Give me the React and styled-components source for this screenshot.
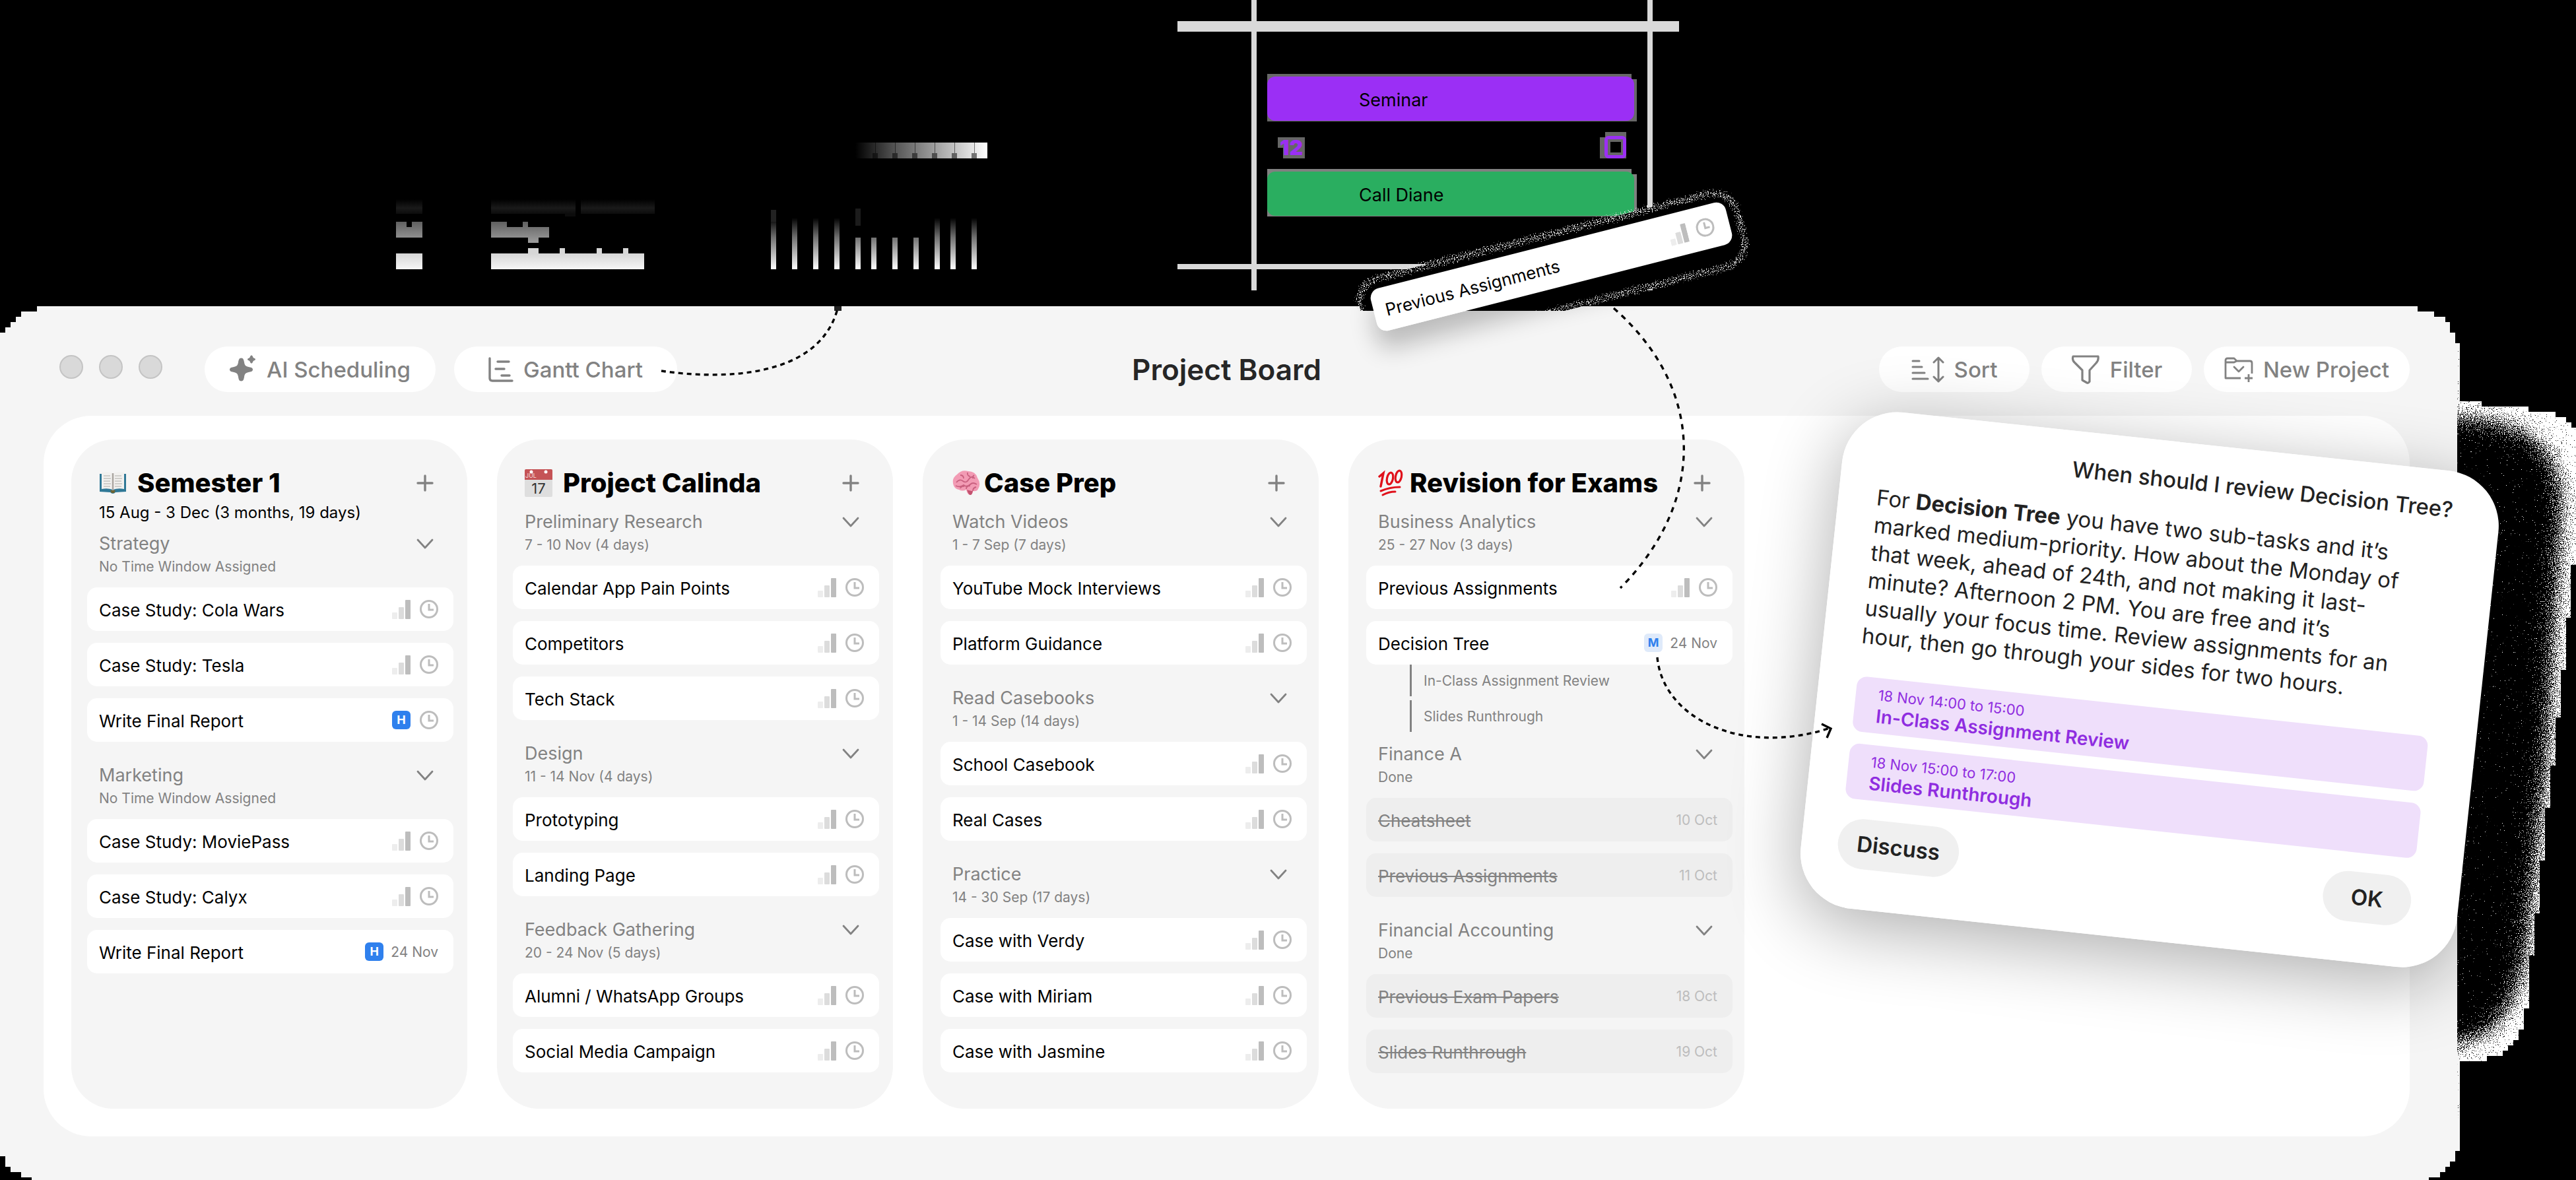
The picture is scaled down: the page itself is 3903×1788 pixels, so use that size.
import React from "react";
import styled, { createGlobalStyle, css } from "styled-components";

const GlobalStyle = createGlobalStyle`
  *, *::before, *::after { box-sizing: border-box; }
  body {
    margin: 0;
    background: #000;
    color: #000;
    font-family: Inter, Roboto, "Liberation Sans", sans-serif;
  }
  button { font: inherit; color: inherit; border: 0; padding: 0; background: none; cursor: pointer; }
  h1, h2, h3, p, ul { margin: 0; padding: 0; }
  ul { list-style: none; }
`;

const Stage = styled.main`
  position: relative;
  min-height: 100vh;
  overflow: hidden;
`;

/* ---------- calendar strip above the window ---------- */

const CalendarStrip = styled.section`
  height: 464px;
  padding: 112px 0 0 1920px;
`;

const DayStack = styled.div`
  display: flex;
  flex-direction: column;
  gap: 16px;
  width: 560px;
`;

const EventBlock = styled.div`
  height: 72px;
  padding: 4px 4px 1px 0;
  background: linear-gradient(${(p) => p.$edge}, ${(p) => p.$edge}) 0 0 / 552px 100% no-repeat,
    linear-gradient(${(p) => p.$edge}, ${(p) => p.$edge}) 0 8px / 100% 64px no-repeat;
`;

const EventFill = styled.div`
  display: flex;
  align-items: center;
  height: 100%;
  padding: 4px 0 0 139px;
  border-radius: 12px;
  background: ${(p) => p.$color};
  font-size: 27px;
`;

const DayFooter = styled.div`
  display: flex;
  justify-content: space-between;
  align-items: flex-end;
  height: 40px;
  padding: 0 16px;
`;

const DayNumber = styled.span`
  padding: 0 3px;
  height: 32px;
  background: linear-gradient(#666, #666) 0 0 / 100% 16px no-repeat,
    linear-gradient(#666, #666) 8px 0 / 100% 100% no-repeat;
  color: #9b2ff5;
  font-size: 32px;
  font-weight: 900;
  line-height: 32px;
`;

const DayCheck = styled.input`
  appearance: none;
  width: 40px;
  height: 40px;
  margin: 0;
  padding: 6px 0 0 7px;
  background: linear-gradient(#666, #666) 8px 0 / 32px 8px no-repeat,
    linear-gradient(#666, #666) 0 8px / 100% 32px no-repeat;
  &::before {
    content: "";
    display: block;
    width: 33px;
    height: 34px;
    border: 5px solid #9b2ff5;
    border-radius: 6px;
    background: linear-gradient(#000, #000) center / 16px 16px no-repeat #666;
  }
`;

/* ---------- window ---------- */

const Window = styled.section`
  margin-right: 176px;
  min-height: calc(100vh - 464px);
  padding: 61px 76px 66px 66px;
  background: #f5f5f5;
  clip-path: polygon(
    0 40px, 8px 40px, 8px 32px, 16px 32px, 16px 24px, 24px 24px, 24px 16px, 32px 16px, 32px 8px, 56px 8px, 56px 0,
    calc(100% - 64px) 0, calc(100% - 64px) 8px, calc(100% - 39px) 8px, calc(100% - 39px) 16px,
    calc(100% - 22px) 16px, calc(100% - 22px) 24px, calc(100% - 15px) 24px, calc(100% - 15px) 40px,
    calc(100% - 7px) 40px, calc(100% - 7px) 56px, 100% 56px,
    100% calc(100% - 44px), calc(100% - 7px) calc(100% - 44px), calc(100% - 7px) calc(100% - 28px),
    calc(100% - 15px) calc(100% - 28px), calc(100% - 15px) calc(100% - 20px), calc(100% - 22px) calc(100% - 20px),
    calc(100% - 22px) calc(100% - 12px), calc(100% - 30px) calc(100% - 12px), calc(100% - 30px) calc(100% - 4px),
    calc(100% - 47px) calc(100% - 4px), calc(100% - 47px) 100%,
    48px 100%, 48px calc(100% - 4px), 32px calc(100% - 4px), 32px calc(100% - 12px), 16px calc(100% - 12px),
    16px calc(100% - 20px), 8px calc(100% - 20px), 8px calc(100% - 36px), 0 calc(100% - 36px)
  );
`;

const Toolbar = styled.header`
  display: grid;
  grid-template-columns: 1fr auto 1fr;
  align-items: center;
  height: 69px;
  margin-bottom: 36px;
`;

const ToolGroup = styled.div`
  display: flex;
  align-items: center;
  gap: ${(p) => p.$gap}px;
  justify-content: ${(p) => p.$align || "flex-start"};
`;

const Lights = styled.div`
  display: flex;
  gap: 24px;
  padding: 0 36px 8px 24px;
`;

const Light = styled.span`
  width: 36px;
  height: 36px;
  border: 2px solid #c4c4c4;
  border-radius: 50%;
  background: #d9d9d9;
`;

const Title = styled.h1`
  color: #262626;
  font-size: 44px;
  font-weight: 600;
  line-height: 56px;
`;

const ToolButton = styled.button`
  display: flex;
  align-items: center;
  justify-content: center;
  gap: 15px;
  height: 69px;
  min-width: ${(p) => p.$width}px;
  border-radius: 35px;
  background: #fff;
  color: #828282;
  font-size: 33px;
  font-weight: 500;
  line-height: 40px;
`;

const Board = styled.div`
  display: grid;
  grid-template-columns: repeat(4, minmax(0, 1fr));
  gap: 45px;
  padding: 36px 1008px 42px 42px;
  border-radius: 72px;
  background: #fff;
`;

const Column = styled.section`
  display: flex;
  flex-direction: column;
  padding: 38px 21px 54px ${(p) => (p.$late ? 27 : 24)}px;
  ${(p) => p.$late && css`padding-right: 18px;`}
  border-radius: 64px;
  background: #f5f5f5;
`;

const ColumnHead = styled.header`
  display: flex;
  align-items: center;
  height: 56px;
  padding: 0 ${(p) => (p.$late ? 33 : 30)}px 0 18px;
`;

const ColumnTitle = styled.h2`
  flex: 1;
  margin-left: ${(p) => (p.$late ? 6 : 16)}px;
  font-size: 40px;
  font-weight: 800;
  line-height: 56px;
  white-space: nowrap;
`;

const ColumnDates = styled.p`
  padding-left: 18px;
  font-size: 24px;
  line-height: 33px;
`;

const Group = styled.section`
  margin-top: ${(p) => p.$top}px;
`;

const GroupHead = styled.header`
  display: flex;
  align-items: center;
  justify-content: space-between;
  height: 40px;
  padding: 0 30px 0 18px;
`;

const GroupTitle = styled.h3`
  color: #828282;
  font-size: 27px;
  font-weight: 400;
  line-height: 42px;
`;

const GroupDates = styled.p`
  margin-bottom: 16px;
  padding-left: 18px;
  color: #828282;
  font-size: 21px;
  line-height: 30px;
`;

const IconButton = styled.button`
  display: flex;
  width: 26px;
  height: 26px;
  color: #828282;
`;

const Tasks = styled.ul`
  display: flex;
  flex-direction: column;
  gap: 18px;
`;

const TaskCard = styled.div`
  display: flex;
  align-items: center;
  justify-content: space-between;
  height: 66px;
  padding: 0 23px 0 18px;
  border-radius: 15px;
  background: ${(p) => (p.$done ? "#eeeeee" : "#ffffff")};
  color: ${(p) => (p.$done ? "#828282" : "#000000")};
  font-size: 26px;
  line-height: 32px;
  white-space: nowrap;
`;

const TaskName = styled.span`
  padding-top: 4px;
  text-decoration: ${(p) => (p.$done ? "line-through" : "none")};
`;

const Meta = styled.span`
  display: flex;
  align-items: center;
  gap: ${(p) => (p.$dated ? 11 : 14)}px;
`;

const DueDate = styled.time`
  padding-top: 2px;
  color: ${(p) => (p.$done ? "#bdbdbd" : "#828282")};
  font-size: 21px;
`;

const Priority = styled.span`
  display: flex;
  align-items: center;
  justify-content: center;
  width: 28px;
  height: 28px;
  border-radius: 6px;
  background: ${(p) => (p.$level === "H" ? "#2f80ed" : "#dfeafa")};
  color: ${(p) => (p.$level === "H" ? "#ffffff" : "#2f80ed")};
  font-size: 18px;
  font-weight: 700;
`;

const Subtasks = styled.ul`
  display: flex;
  flex-direction: column;
  gap: 6px;
  padding-left: 66px;
`;

const Subtask = styled.li`
  height: 48px;
  padding-left: 18px;
  border-left: 3px solid #828282;
  color: #828282;
  font-size: 21px;
  line-height: 50px;
`;

/* ---------- floating pieces ---------- */

const Drawing = styled.svg`
  position: absolute;
  top: 0;
  left: 0;
  pointer-events: none;
`;

const ShadowClip = styled.div`
  position: absolute;
  inset: 464px 176px 0 0;
  overflow: hidden;
  pointer-events: none;
`;

const PopupShadow = styled.div`
  position: absolute;
  top: 203px;
  left: 2757px;
  width: 1000px;
  height: 756px;
  border-radius: 84px;
  box-shadow: 0 24px 110px rgba(0, 0, 0, 0.32);
  transform: rotate(6.1deg);
`;

const Popup = styled.section`
  position: absolute;
  top: 667px;
  left: 2757px;
  width: 1000px;
  padding: 37px 72px 61px 58px;
  border-radius: 84px;
  background: #fff;
  color: #222;
  font-size: 33px;
  line-height: 42px;
  white-space: nowrap;
  transform: rotate(6.1deg);
`;

const Question = styled.p`
  margin-bottom: 32px;
  font-weight: 500;
  text-align: right;
`;

const Slots = styled.div`
  display: flex;
  flex-direction: column;
  gap: 18px;
  margin: 41px 0 29px;
`;

const Slot = styled.div`
  height: 84px;
  padding: 10px 34px;
  border-radius: 15px;
  background: #efdffb;
  color: #8f2de0;
  font-size: 22px;
  line-height: 32px;
`;

const SlotName = styled.strong`
  display: block;
  font-size: 28px;
  font-weight: 600;
`;

const Actions = styled.div`
  display: flex;
  justify-content: space-between;
  margin-left: -3px;
`;

const ActionButton = styled.button`
  height: 76px;
  min-width: ${(p) => p.$width}px;
  border-radius: 38px;
  background: #f0f0f0;
  font-size: 33px;
  font-weight: 600;
`;

const DraggedCard = styled.div`
  position: absolute;
  top: 371px;
  left: 2073px;
  width: 555px;
  border-radius: 15px;
  box-shadow: -4px 26px 36px rgba(0, 0, 0, 0.24);
  transform: rotate(-14.3deg);
`;

/* ---------- icons ---------- */

const BarsIcon = () => (
  <svg width="28" height="30" viewBox="0 0 28 30" aria-hidden="true">
    <rect x="0" y="20" width="8" height="10" rx="1" fill="#ededed" />
    <rect x="10" y="12" width="8" height="18" rx="1" fill="#dcdcdc" />
    <rect x="20" y="1" width="8" height="29" rx="1" fill="#bdbdbd" />
  </svg>
);

const ClockIcon = () => (
  <svg width="28" height="28" viewBox="0 0 28 28" fill="none" stroke="#bdbdbd" strokeWidth="3" aria-hidden="true">
    <circle cx="14" cy="14" r="12.5" />
    <path d="M14 6v9h7" />
  </svg>
);

const PlusIcon = () => (
  <svg width="26" height="26" viewBox="0 0 26 26" stroke="currentColor" strokeWidth="3.4" strokeLinecap="round">
    <path d="M13 2v22M2 13h22" />
  </svg>
);

const ChevronIcon = () => (
  <svg width="26" height="26" viewBox="0 0 26 26" fill="none" stroke="currentColor" strokeWidth="2.8" strokeLinecap="round" strokeLinejoin="round">
    <path d="M2 7l11 12L24 7" />
  </svg>
);

const SparkleIcon = () => (
  <svg width="41" height="44" viewBox="0 0 41 44" fill="currentColor">
    <path d="M17.500 4.500C21 4.500 21.500 8 22 11C22.800 15.500 24 17 28.500 18C31.500 18.600 35 19 35 22C35 25 31.500 25.400 28.500 26C24 27 22.800 28.500 22 33C21.500 36 21 39.500 17.500 39.500C14 39.500 13.500 36 13 33C12.200 28.500 11 27 6.500 26C3.500 25.400 0 25 0 22C0 19 3.500 18.600 6.500 18C11 17 12.200 15.500 13 11C13.500 8 14 4.500 17.500 4.500Z" />
    <path d="M33 0.500C35 0.500 35 3.200 35.800 4C36.600 4.800 39 4.800 39 6.500C39 8.200 36.600 8.200 35.800 9C35 9.800 35 12.500 33 12.500C31 12.500 31 9.800 30.200 9C29.400 8.200 27 8.200 27 6.500C27 4.800 29.400 4.800 30.200 4C31 3.200 31 0.500 33 0.500Z" />
  </svg>
);

const GanttIcon = () => (
  <svg width="38" height="38" viewBox="0 0 38 38" fill="none" stroke="currentColor" strokeWidth="3.400" strokeLinecap="round">
    <path d="M2 2v30q0 4 4 4h30M14 7h17M11 18h13M20 28h12" />
  </svg>
);

const SortIcon = () => (
  <svg width="50" height="40" viewBox="0 0 50 40" fill="none" stroke="currentColor" strokeWidth="3" strokeLinecap="round" strokeLinejoin="round">
    <path d="M2 7h10M2 16h14M2 25h18M2 34h23M41 2v36M34 9l7-7 7 7M34 31l7 7 7-7" />
  </svg>
);

const FilterIcon = () => (
  <svg width="44" height="44" viewBox="0 0 44 44" fill="none" stroke="currentColor" strokeWidth="3.200" strokeLinejoin="round">
    <path d="M3 2h38q1 6-3 10L28 23v17q-2 3-4 2l-7-4V23L6 12Q1 8 3 2Z" />
  </svg>
);

const FolderIcon = () => (
  <svg width="44" height="40" viewBox="0 0 44 40" fill="none" stroke="currentColor" strokeWidth="2.800" strokeLinejoin="round">
    <path d="M25 33H2V6q0-3 3-3h10l4 4h20q3 0 3 3v16M2 9h13l4-2M37 27v12M31 33h12" />
    <path d="M15 16l7 7 7-7" strokeLinecap="round" />
  </svg>
);

const BookEmoji = () => (
  <svg width="42" height="36" viewBox="0 0 42 36" aria-hidden="true">
    <path d="M1 4h40v27l-16 1q-4 4-8 0l-16-1Z" fill="#2f7896" />
    <path d="M4 2q9-2 17 1 8-3 17-1v25q-9-2-17 1-8-3-17-1Z" fill="#f2f1ef" />
    <path d="M21 3v26" stroke="#a9a5a0" strokeWidth="2.500" />
    <path d="M7 7h10M7 11h11M7 15h10M7 19h11M7 23h10M24 7h10M24 11h11M24 15h10M24 19h11M24 23h10" stroke="#c4c2bf" strokeWidth="1.500" fill="none" />
    <path d="M17 29h8l-2 4h-4Z" fill="#6f6434" />
  </svg>
);

const CalendarEmoji = () => (
  <svg width="42" height="42" viewBox="0 0 42 42" aria-hidden="true">
    <rect width="42" height="42" rx="2" fill="#dedede" />
    <path d="M0 2q0-2 2-2h38q2 0 2 2v14H0Z" fill="#c55356" />
    <circle cx="10" cy="4" r="2.500" fill="#fff" />
    <circle cx="32" cy="4" r="2.500" fill="#fff" />
    <text x="1" y="13" fontSize="9" fill="#f3dcdc">JUL</text>
    <text x="21" y="37" fontSize="22" textAnchor="middle" fill="#333">17</text>
  </svg>
);

const BrainEmoji = () => (
  <svg width="42" height="42" viewBox="0 0 42 42" aria-hidden="true">
    <path d="M2 25Q-2 14 7 8 14 0 24 3q11 0 14 10 6 9 1 17-2 4-8 3-1 6-4 6-4 0-6-8-6 3-11 0-6-1-8-6Z" fill="#f29bb4" />
    <path d="M6 20q5-6 10-2t9-3q4-6 9-1M5 25q7 3 12-1 5 4 10-1 4-4 10 0M12 9q5 0 5 5M23 5q-1 5 4 6M33 9q-3 2-2 5M21 30q0-5 6-5M31 33q0-5 5-6M12 29q1-4 6-3" stroke="#c9607f" strokeWidth="1.800" fill="none" />
    <path d="M22 31q6 2 9 2-1 6-4 6-3-1-5-8Z" fill="#c3526f" />
  </svg>
);

const HundredEmoji = () => (
  <svg width="42" height="42" viewBox="0 0 42 42" fill="none" stroke="#e0111b" strokeLinecap="round" aria-hidden="true">
    <path d="M2 11l6-5-4 20" strokeWidth="3.500" />
    <ellipse cx="18" cy="14" rx="4.500" ry="9" transform="rotate(12 18 14)" strokeWidth="3.200" />
    <ellipse cx="31" cy="11" rx="4.500" ry="9" transform="rotate(12 31 11)" strokeWidth="3.200" />
    <path d="M4 33q14-6 29-6" strokeWidth="3" />
    <path d="M7 39q9-5 19-5" strokeWidth="3" />
  </svg>
);

/* ---------- data ---------- */

const t = (name, extra = {}) => ({ name, ...extra });

const columns = [
  {
    title: "Semester 1",
    icon: BookEmoji,
    dates: "15 Aug - 3 Dec (3 months, 19 days)",
    groups: [
      {
        title: "Strategy",
        dates: "No Time Window Assigned",
        tasks: [t("Case Study: Cola Wars"), t("Case Study: Tesla"), t("Write Final Report", { level: "H" })],
      },
      {
        title: "Marketing",
        dates: "No Time Window Assigned",
        tasks: [t("Case Study: MoviePass"), t("Case Study: Calyx"), t("Write Final Report", { level: "H", due: "24 Nov" })],
      },
    ],
  },
  {
    title: "Project Calinda",
    icon: CalendarEmoji,
    groups: [
      {
        title: "Preliminary Research",
        dates: "7 - 10 Nov (4 days)",
        tasks: [t("Calendar App Pain Points"), t("Competitors"), t("Tech Stack")],
      },
      { title: "Design", dates: "11 - 14 Nov (4 days)", tasks: [t("Prototyping"), t("Landing Page")] },
      {
        title: "Feedback Gathering",
        dates: "20 - 24 Nov (5 days)",
        tasks: [t("Alumni / WhatsApp Groups"), t("Social Media Campaign")],
      },
    ],
  },
  {
    title: "Case Prep",
    icon: BrainEmoji,
    late: true,
    groups: [
      { title: "Watch Videos", dates: "1 - 7 Sep (7 days)", tasks: [t("YouTube Mock Interviews"), t("Platform Guidance")] },
      { title: "Read Casebooks", dates: "1 - 14 Sep (14 days)", tasks: [t("School Casebook"), t("Real Cases")] },
      {
        title: "Practice",
        dates: "14 - 30 Sep (17 days)",
        tasks: [t("Case with Verdy"), t("Case with Miriam"), t("Case with Jasmine")],
      },
    ],
  },
  {
    title: "Revision for Exams",
    icon: HundredEmoji,
    late: true,
    groups: [
      {
        title: "Business Analytics",
        dates: "25 - 27 Nov (3 days)",
        tasks: [
          t("Previous Assignments"),
          t("Decision Tree", { level: "M", due: "24 Nov", subtasks: ["In-Class Assignment Review", "Slides Runthrough"] }),
        ],
      },
      {
        title: "Finance A",
        dates: "Done",
        tight: true,
        tasks: [t("Cheatsheet", { due: "10 Oct", done: true }), t("Previous Assignments", { due: "11 Oct", done: true })],
      },
      {
        title: "Financial Accounting",
        dates: "Done",
        tasks: [t("Previous Exam Papers", { due: "18 Oct", done: true }), t("Slides Runthrough", { due: "19 Oct", done: true })],
      },
    ],
  },
];

const Task = ({ task }) => (
  <TaskCard $done={task.done}>
    <TaskName as={task.done ? "s" : "span"} $done={task.done}>
      {task.name}
    </TaskName>
    <Meta $dated={Boolean(task.due)}>
      {task.level && <Priority $level={task.level}>{task.level}</Priority>}
      {!task.level && !task.due && <BarsIcon />}
      {task.due ? <DueDate $done={task.done}>{task.due}</DueDate> : <ClockIcon />}
    </Meta>
  </TaskCard>
);

const TaskGroup = ({ group, first }) => (
  <Group $top={first ? 11 : group.tight ? 14 : 31}>
    <GroupHead>
      <GroupTitle>{group.title}</GroupTitle>
      <IconButton aria-label={`Collapse ${group.title}`}>
        <ChevronIcon />
      </IconButton>
    </GroupHead>
    <GroupDates>{group.dates}</GroupDates>
    <Tasks>
      {group.tasks.map((task, i) => (
        <li key={i}>
          <Task task={task} />
          {task.subtasks && (
            <Subtasks>
              {task.subtasks.map((name) => (
                <Subtask key={name}>{name}</Subtask>
              ))}
            </Subtasks>
          )}
        </li>
      ))}
    </Tasks>
  </Group>
);

const barXs = [1168, 1200, 1232, 1264, 1296, 1320, 1352, 1384, 1416, 1440, 1472];

const CalendarRemains = () => (
  <Drawing width="3903" height="464" viewBox="0 0 3903 464" aria-hidden="true">
    <defs>
      <linearGradient id="low" x1="0" y1="384" x2="0" y2="408" gradientUnits="userSpaceOnUse">
        <stop offset="0" stopColor="#d6d6d6" />
        <stop offset="1" stopColor="#f6f6f6" />
      </linearGradient>
      <linearGradient id="mid" x1="0" y1="336" x2="0" y2="366" gradientUnits="userSpaceOnUse">
        <stop offset="0" stopColor="#606060" />
        <stop offset="1" stopColor="#9a9a9a" />
      </linearGradient>
      <linearGradient id="faint" x1="0" y1="302" x2="0" y2="324" gradientUnits="userSpaceOnUse">
        <stop offset="0" stopColor="#000" />
        <stop offset="0.600" stopColor="#1a1a1a" />
        <stop offset="1" stopColor="#0c0c0c" />
      </linearGradient>
      <linearGradient id="post" x1="0" y1="330" x2="0" y2="408" gradientUnits="userSpaceOnUse">
        <stop offset="0" stopColor="#000" />
        <stop offset="0.380" stopColor="#707070" />
        <stop offset="1" stopColor="#fff" />
      </linearGradient>
      <linearGradient id="ramp" x1="1296" y1="0" x2="1496" y2="0" gradientUnits="userSpaceOnUse">
        <stop offset="0" stopColor="#000" />
        <stop offset="0.300" stopColor="#555" />
        <stop offset="1" stopColor="#fff" />
      </linearGradient>
    </defs>
    <path d="M600 384h40v24h-40zM744 384h56v-8h16v8h32v-8h8v8h48v-8h8v8h32v-8h8v8h24v24h-232z" fill="url(#low)" />
    <path d="M600 336h16v8h8v-8h16v24h-40zM744 336h24v8h24v-8h8v8h32v16h-16v8h-16v-8h-56z" fill="url(#mid)" />
    <path d="M600 302h40v22h-40zM744 302h128v26h-16v-4h-112zM880 302h112v22h-112z" fill="url(#faint)" />
    {barXs.map((x, i) => (
      <rect key={x} x={x} y={i > 3 && i < 8 ? 360 : 330} width="8" height={i > 3 && i < 8 ? 48 : 78} fill="url(#post)" />
    ))}
    <rect x="1168" y="318" width="8" height="18" fill="#222" />
    <rect x="1296" y="316" width="8" height="26" fill="#1c1c1c" />
    <rect x="1296" y="216" width="200" height="24" fill="url(#ramp)" />
    {[1326, 1356, 1386, 1416, 1446, 1476].map((x) => (
      <path key={x} d={`M${x} 216h1v16h3v8h-8v-8h4z`} fill="#000" fillOpacity="0.500" />
    ))}
    <g fill="#d9d9d9">
      <rect x="1784" y="32" width="760" height="16" />
      <rect x="1896" y="0" width="8" height="440" />
      <rect x="2496" y="0" width="8" height="440" />
      <rect x="1784" y="400" width="440" height="8" />
      <rect x="2200" y="404" width="341" height="4" />
    </g>
  </Drawing>
);

const GrainShadows = () => (
  <Drawing width="3903" height="1788" viewBox="0 0 3903 1788" aria-hidden="true">
    <defs>
      <filter id="grain" x="3600" y="500" width="303" height="1200" filterUnits="userSpaceOnUse">
        <feGaussianBlur in="SourceAlpha" stdDeviation="22" result="soft" />
        <feTurbulence type="fractalNoise" baseFrequency="0.7" numOctaves="2" seed="4" result="noise" />
        <feComposite in="soft" in2="noise" operator="arithmetic" k2="1" k3="1.900" k4="-0.950" />
        <feColorMatrix values="0 0 0 0 0  0 0 0 0 0  0 0 0 0 0  0 0 0 10 -4.200" />
      </filter>
      <filter id="speck" x="1980" y="240" width="740" height="260" filterUnits="userSpaceOnUse">
        <feGaussianBlur in="SourceAlpha" stdDeviation="6" result="soft" />
        <feTurbulence type="fractalNoise" baseFrequency="0.6" numOctaves="2" seed="9" result="noise" />
        <feComposite in="soft" in2="noise" operator="arithmetic" k1="1.600" />
        <feColorMatrix values="0 0 0 0 0.800  0 0 0 0 0.800  0 0 0 0 0.800  0 0 0 9 -7.300" />
      </filter>
      <clipPath id="above">
        <rect x="0" y="0" width="3903" height="471" />
      </clipPath>
      <clipPath id="beside">
        <rect x="3723" y="500" width="180" height="1200" />
      </clipPath>
    </defs>
    <path
      fill="#fff"
      d="M3727 608H3760V616H3831V624H3872V632H3888V640H3896V648H3903V856H3895V936H3888V1015H3880V1087H3872V1160H3864V1224H3856V1304H3848V1384H3840V1448H3832V1528H3824V1560H3816V1576H3808V1584H3800V1592H3792V1600H3768V1608H3727Z"
    />
    <g clipPath="url(#beside)">
      <path
        filter="url(#grain)"
        d="M3600 626L3730 634Q3886 640 3880 770L3859 1136L3831 1403Q3818 1572 3723 1580L3600 1590Z"
      />
    </g>
    <g clipPath="url(#above)">
      <g transform="rotate(-14.3 2350 404)">
        <rect x="2054" y="354" width="592" height="120" rx="34" fill="#000" />
      </g>
      <g filter="url(#speck)">
        <g transform="rotate(-14.3 2350 404)">
          <rect x="2054" y="356" width="590" height="114" rx="36" fill="none" stroke="#fff" strokeWidth="22" />
        </g>
      </g>
    </g>
  </Drawing>
);

const Connectors = () => (
  <Drawing width="3903" height="1788" viewBox="0 0 3903 1788" fill="none" stroke="#000" strokeWidth="3.400" aria-hidden="true">
    <path d="M1264 464h11v7h-11z" fill="#222" stroke="none" />
    <path d="M1002 562C1090 575 1240 575 1269 468" strokeDasharray="7 6" />
    <path d="M2445 467C2585 590 2585 760 2455 891" strokeDasharray="8 8" />
    <path d="M2511 996C2520 1090 2640 1145 2770 1104" strokeDasharray="7 6" />
    <path d="M2760 1097L2774 1104L2768 1118" />
  </Drawing>
);

export default function App() {
  return (
    <>
      <GlobalStyle />
      <Stage>
        <CalendarRemains />
        <CalendarStrip>
          <DayStack>
            <EventBlock $edge="#686868">
              <EventFill $color="#9b2ff5">Seminar</EventFill>
            </EventBlock>
            <DayFooter>
              <DayNumber>12</DayNumber>
              <DayCheck type="checkbox" aria-label="Day 12 done" />
            </DayFooter>
            <EventBlock $edge="#808080">
              <EventFill $color="#2aae60">Call Diane</EventFill>
            </EventBlock>
          </DayStack>
        </CalendarStrip>

        <Window>
          <Toolbar>
            <ToolGroup $gap={28}>
              <Lights>
                <Light />
                <Light />
                <Light />
              </Lights>
              <ToolButton $width={350}>
                <SparkleIcon />
                AI Scheduling
              </ToolButton>
              <ToolButton $width={338}>
                <GanttIcon />
                Gantt Chart
              </ToolButton>
            </ToolGroup>
            <Title>Project Board</Title>
            <ToolGroup $gap={18} $align="flex-end">
              <ToolButton $width={228}>
                <SortIcon />
                Sort
              </ToolButton>
              <ToolButton $width={228}>
                <FilterIcon />
                Filter
              </ToolButton>
              <ToolButton $width={312}>
                <FolderIcon />
                New Project
              </ToolButton>
            </ToolGroup>
          </Toolbar>

          <Board>
            {columns.map((column) => {
              const Emoji = column.icon;
              return (
                <Column key={column.title} $late={column.late}>
                  <ColumnHead $late={column.late}>
                    <Emoji />
                    <ColumnTitle $late={column.late}>{column.title}</ColumnTitle>
                    <IconButton aria-label={`Add to ${column.title}`}>
                      <PlusIcon />
                    </IconButton>
                  </ColumnHead>
                  {column.dates && <ColumnDates>{column.dates}</ColumnDates>}
                  {column.groups.map((group, i) => (
                    <TaskGroup key={group.title} group={group} first={i === 0} />
                  ))}
                </Column>
              );
            })}
          </Board>
        </Window>

        <ShadowClip>
          <PopupShadow />
        </ShadowClip>
        <GrainShadows />

        <Popup>
          <Question>When should I review Decision Tree?</Question>
          <p>
            For <strong>Decision Tree</strong> you have two sub-tasks and it’s
            <br />
            marked medium-priority. How about the Monday of
            <br />
            that week, ahead of 24th, and not making it last-
            <br />
            minute? Afternoon 2 PM. You are free and it’s
            <br />
            usually your focus time. Review assignments for an
            <br />
            hour, then go through your sides for two hours.
          </p>
          <Slots>
            <Slot>
              18 Nov 14:00 to 15:00
              <SlotName>In-Class Assignment Review</SlotName>
            </Slot>
            <Slot>
              18 Nov 15:00 to 17:00
              <SlotName>Slides Runthrough</SlotName>
            </Slot>
          </Slots>
          <Actions>
            <ActionButton $width={184}>Discuss</ActionButton>
            <ActionButton $width={134}>OK</ActionButton>
          </Actions>
        </Popup>

        <DraggedCard>
          <Task task={{ name: "Previous Assignments" }} />
        </DraggedCard>
        <Connectors />
      </Stage>
    </>
  );
}
